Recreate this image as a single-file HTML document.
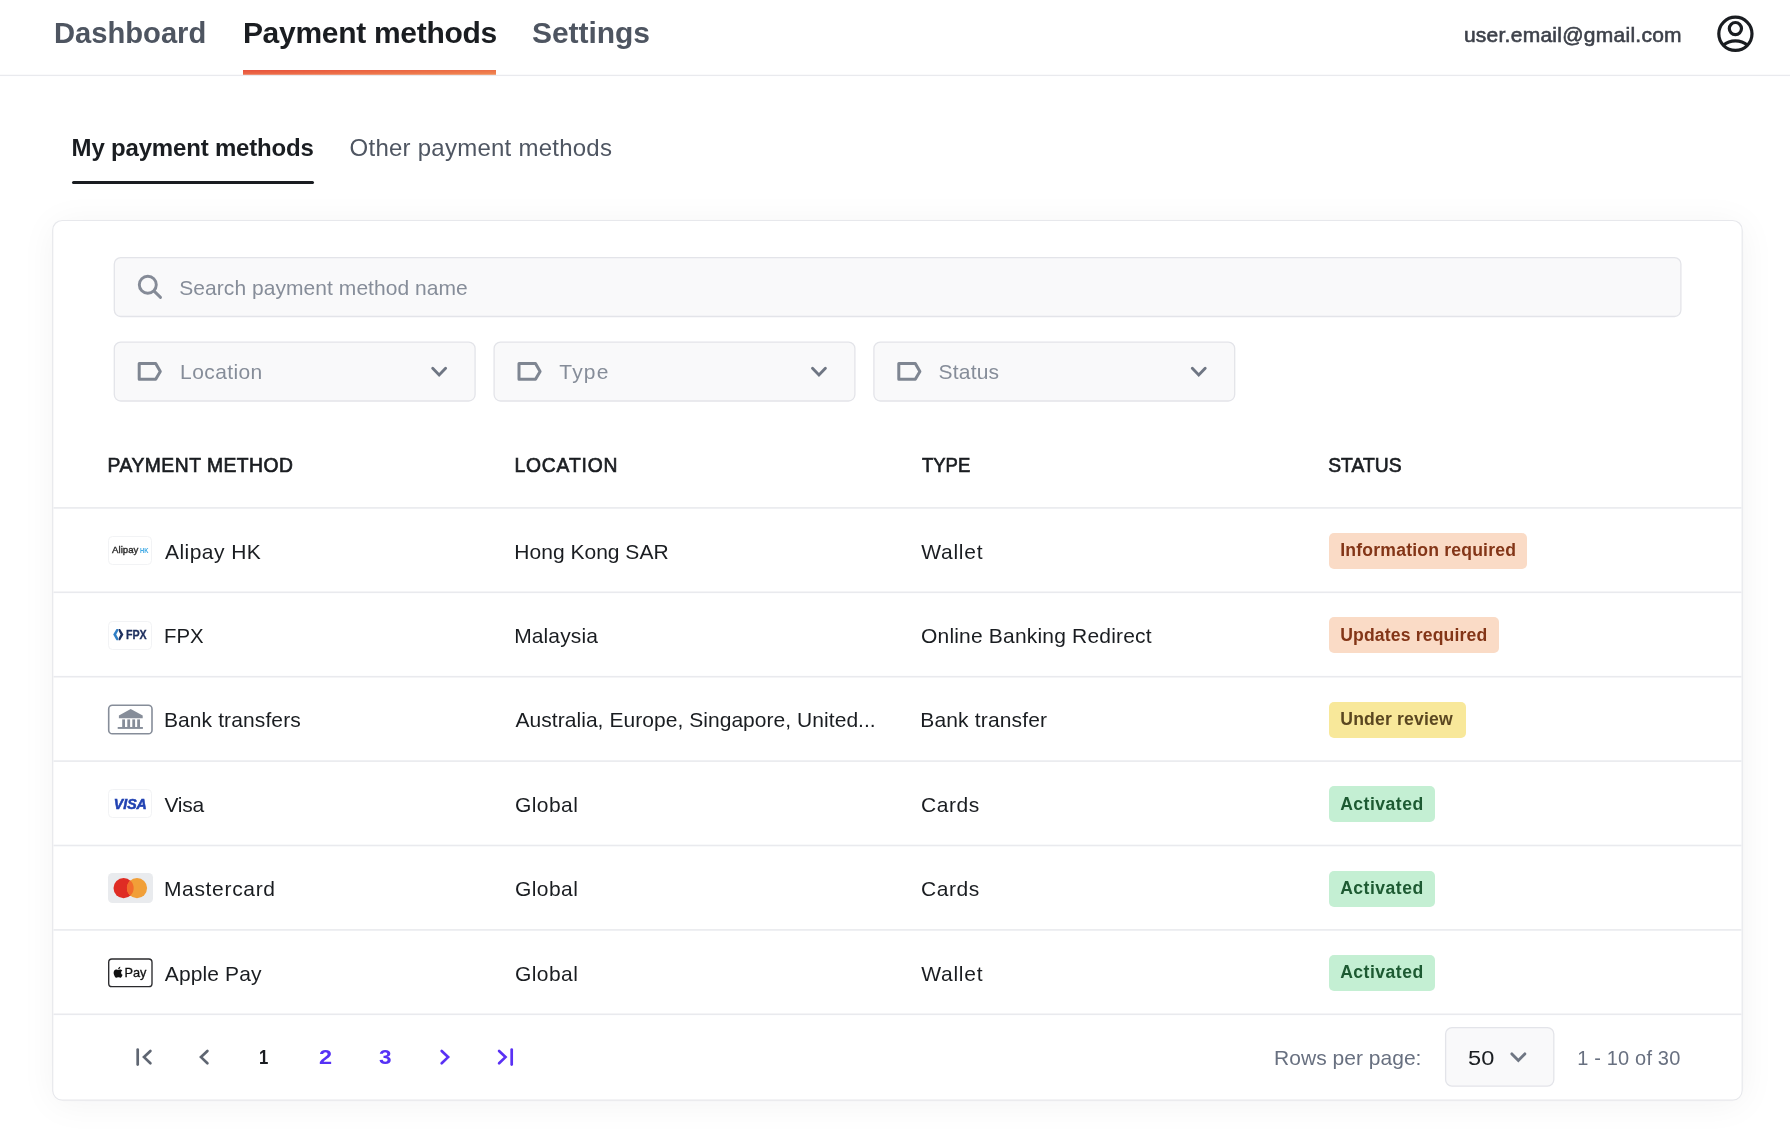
<!DOCTYPE html>
<html lang="en">
<head>
<meta charset="utf-8">
<title>Payment methods</title>
<style>
*{box-sizing:border-box;margin:0;padding:0}
html,body{width:1790px;height:1148px;overflow:hidden;background:#fff}
body{position:relative;font-family:"Liberation Sans",sans-serif;color:#1a1d21}
.t{position:absolute;white-space:pre;display:block}
#root{position:absolute;left:0;top:0;width:1790px;height:1148px;will-change:transform}
.navactive{position:absolute;left:243px;top:69.9px;width:253.4px;height:5px;background:linear-gradient(to bottom,rgba(228,70,55,.35),rgba(245,150,90,.35)),linear-gradient(to right,#e9583f,#f08650)}
.subactive{position:absolute;left:71.6px;top:181px;width:242.2px;height:3.2px;background:#1a1d21;border-radius:1.5px}
.card{position:absolute;left:52.5px;top:220.3px;width:1690px;height:880px;border-radius:10px;background:#fff;box-shadow:0 4px 36px rgba(15,20,40,.05),0 1px 8px rgba(15,20,40,.02)}
.badge{position:absolute;height:36px;border-radius:5px}
.logo{position:absolute;left:108.2px;width:44.2px;height:29px;border-radius:4.5px;background:#fff;border:1px solid #f2f3f5;overflow:hidden}
svg{position:absolute;overflow:visible}
</style>
</head>
<body>
<div id="root">
<div class="navactive"></div>
<div class="subactive"></div>
<div class="card"></div>
<svg width="1790" height="1148" viewBox="0 0 1790 1148" style="left:0;top:0"><rect x="52.7" y="220.5" width="1689.5" height="879.6" rx="9.5" fill="#fff" stroke="#e7e8ec" stroke-width="1.2"/><g fill="#f9f9fa" stroke="#e3e4e9" stroke-width="1.3">
<rect x="114.3" y="257.6" width="1566.6" height="58.9" rx="6.4"/>
<rect x="114.3" y="342.1" width="360.8" height="58.9" rx="6.4"/>
<rect x="494.1" y="342.1" width="360.8" height="58.9" rx="6.4"/>
<rect x="873.9" y="342.1" width="360.8" height="58.9" rx="6.4"/>
<rect x="1445.6" y="1027.7" width="108.2" height="58.5" rx="6.4"/>
</g></svg>
<div class="badge" style="left:1328.6px;top:532.9px;width:198.6px;background:#fadbc6"></div>
<div class="badge" style="left:1328.6px;top:617.3px;width:170.1px;background:#fadbc6"></div>
<div class="badge" style="left:1328.6px;top:701.7px;width:137.0px;background:#f8e89a"></div>
<div class="badge" style="left:1328.6px;top:786.1px;width:106.8px;background:#c4efd3"></div>
<div class="badge" style="left:1328.6px;top:870.5px;width:106.8px;background:#c4efd3"></div>
<div class="badge" style="left:1328.6px;top:954.9px;width:106.8px;background:#c4efd3"></div>
<svg width="1790" height="1148" viewBox="0 0 1790 1148" style="left:0;top:0"><g fill="#e9eaee"><rect x="0" y="74.75" width="1790" height="1.3"/><rect x="53.5" y="507.10" width="1688" height="1.6"/><rect x="53.5" y="591.50" width="1688" height="1.6"/><rect x="53.5" y="675.90" width="1688" height="1.6"/><rect x="53.5" y="760.30" width="1688" height="1.6"/><rect x="53.5" y="844.70" width="1688" height="1.6"/><rect x="53.5" y="929.10" width="1688" height="1.6"/><rect x="53.5" y="1013.50" width="1688" height="1.6"/></g></svg>
<svg width="1790" height="1148" viewBox="0 0 1790 1148" style="left:0;top:0">
<!-- user icon -->
<g fill="none" stroke="#1a1d21" stroke-width="3.2">
<circle cx="1735.4" cy="33.8" r="16.6"/>
<circle cx="1735.4" cy="28.6" r="6.1"/>
<path d="M1723.2,45.2 C1726.6,42.4 1730.8,40.9 1735.4,40.9 C1740,40.9 1744.2,42.4 1747.6,45.2"/>
</g>
<!-- search icon -->
<g fill="none" stroke="#858b97" stroke-width="2.9" stroke-linecap="round">
<circle cx="147.8" cy="284.8" r="8.5"/>
<path d="M154.1,291.1 L160.5,297.4"/>
</g>
<!-- label icons -->
<g fill="none" stroke="#7f8692" stroke-width="3" stroke-linejoin="round">
<path d="M139.2,363.5 H155.7 L160.3,371.4 L155.7,379.3 H139.2 Z"/>
<path d="M519.0,363.5 H535.5 L540.1,371.4 L535.5,379.3 H519.0 Z"/>
<path d="M898.8,363.5 H915.3 L919.9,371.4 L915.3,379.3 H898.8 Z"/>
</g>
<!-- chevrons -->
<g fill="none" stroke="#6f7683" stroke-width="2.9" stroke-linecap="round" stroke-linejoin="miter">
<path d="M432.70,368.3 L439.15,374.9 L445.60,368.3"/>
<path d="M812.50,368.3 L818.95,374.9 L825.40,368.3"/>
<path d="M1192.30,368.3 L1198.75,374.9 L1205.20,368.3"/>
<path d="M1511.90,1053.9 L1518.35,1060.5 L1524.80,1053.9"/>
</g>
<!-- pagination icons -->
<g fill="none" stroke="#5f6672" stroke-width="2.7" stroke-linecap="round" stroke-linejoin="miter">
<path d="M137.7,1049.6 V1064.6"/>
<path d="M150.4,1051 L144,1057.1 L150.4,1063.3"/>
<path d="M207.4,1051 L201,1057.1 L207.4,1063.3"/>
</g>
<g fill="none" stroke="#5a31f4" stroke-width="2.7" stroke-linecap="round" stroke-linejoin="miter">
<path d="M441.7,1051 L448.1,1057.1 L441.7,1063.3"/>
<path d="M499.1,1051 L505.5,1057.1 L499.1,1063.3"/>
<path d="M511.7,1049.6 V1064.6"/>
</g>
</svg>
<!-- logos -->
<div class="logo" style="top:536.1px"></div>
<div class="logo" style="top:620.6px"></div>

<div class="logo" style="top:789.4px"></div>
<div class="logo" style="top:873.3px;border:none;background:#e9ebee;left:107.9px;width:44.8px;height:29.9px"></div>

<svg width="1790" height="1148" viewBox="0 0 1790 1148" style="left:0;top:0" font-family="Liberation Sans, sans-serif">
<!-- alipay -->
<text x="112.1" y="553" font-size="8.8" font-weight="400" fill="#2d2d2d" stroke="#2d2d2d" stroke-width="0.35" textLength="26.3" lengthAdjust="spacingAndGlyphs">Alipay</text>
<text x="140" y="553" font-size="6.3" font-weight="700" fill="#3fa9e5" textLength="8.4" lengthAdjust="spacingAndGlyphs">HK</text>
<!-- fpx -->
<path d="M113.2,634.5 L116.5,628.9 L118.2,628.9 L118.2,640.2 L116.5,640.2 Z" fill="#2f7fc6"/>
<path d="M123.4,634.5 L120.1,628.9 L118.6,628.9 L118.6,640.2 L120.1,640.2 Z" fill="#1d2f5e"/>
<path d="M116.2,634.5 L118.4,630.6 L120.6,634.5 L118.4,638.4 Z" fill="#fff"/>
<text x="125.9" y="638.7" font-size="12.2" font-weight="700" fill="#1d2f5e" stroke="#1d2f5e" stroke-width="0.3" textLength="20.8" lengthAdjust="spacingAndGlyphs">FPX</text>
<!-- bank -->
<rect x="108.7" y="705.3" width="43.3" height="28.5" rx="3.6" fill="#fff" stroke="#868d99" stroke-width="1.6"/>
<rect x="108.7" y="959.0" width="43.3" height="27.6" rx="3.2" fill="#fff" stroke="#2a2a2d" stroke-width="1.35"/>
<g fill="#868d99">
<path d="M130.7,709 L142.7,715.6 V718.2 H118.9 V715.6 Z"/>
<rect x="122.2" y="719.4" width="2.8" height="7.8"/>
<rect x="127.3" y="719.4" width="2.8" height="7.8"/>
<rect x="132.3" y="719.4" width="2.8" height="7.8"/>
<rect x="137.2" y="719.4" width="2.8" height="7.8"/>
<rect x="117.7" y="727" width="25.2" height="1.9"/>
</g>
<!-- visa -->
<text x="113.8" y="808.7" font-size="15" font-weight="700" font-style="italic" fill="#2142b2" stroke="#2142b2" stroke-width="0.55" textLength="33" lengthAdjust="spacingAndGlyphs">VISA</text>
<!-- mastercard -->
<circle cx="123.6" cy="888.1" r="10.1" fill="#df2c24"/>
<circle cx="137" cy="888.1" r="10.1" fill="#f19f38"/>
<path d="M130.3,880.55 A10.1,10.1 0 0 1 130.3,895.65 A10.1,10.1 0 0 1 130.3,880.55 Z" fill="#f26b2c"/>
<!-- apple pay -->
<g transform="translate(112.6,966.8) scale(0.458)" fill="#111">
<path d="M12.152 6.896c-.948 0-2.415-1.078-3.96-1.04-2.04.027-3.91 1.183-4.961 3.014-2.117 3.675-.546 9.103 1.519 12.09 1.013 1.454 2.208 3.09 3.792 3.039 1.52-.065 2.09-.987 3.935-.987 1.831 0 2.35.987 3.96.948 1.637-.026 2.676-1.48 3.676-2.948 1.156-1.688 1.636-3.325 1.662-3.415-.039-.013-3.182-1.221-3.22-4.857-.026-3.04 2.48-4.494 2.597-4.559-1.429-2.09-3.623-2.324-4.39-2.376-2-.156-3.675 1.09-4.61 1.09zM15.53 3.83c.843-1.012 1.4-2.427 1.245-3.83-1.207.052-2.662.805-3.532 1.818-.78.896-1.454 2.338-1.273 3.714 1.338.104 2.715-.688 3.559-1.701"/>
</g>
<text x="124.5" y="977.2" font-size="12.8" fill="#111" stroke="#111" stroke-width="0.3" textLength="22" lengthAdjust="spacingAndGlyphs">Pay</text>
</svg>

<span class="t" style="left:53.88px;top:17.61px;font-size:30px;line-height:30px;color:#4e5561;letter-spacing:0.000px;font-weight:700;transform:scaleX(0.9718);transform-origin:0 0">Dashboard</span>
<span class="t" style="left:242.90px;top:17.61px;font-size:30px;line-height:30px;color:#1a1d21;letter-spacing:-0.290px;font-weight:700">Payment methods</span>
<span class="t" style="left:532.08px;top:17.61px;font-size:30px;line-height:30px;color:#4e5561;letter-spacing:-0.083px;font-weight:700">Settings</span>
<span class="t" style="left:1463.89px;top:23.72px;font-size:21px;line-height:21px;color:#3d414a;letter-spacing:0.264px;-webkit-text-stroke:0.6px #3d414a">user.email@gmail.com</span>
<span class="t" style="left:71.62px;top:136.48px;font-size:24px;line-height:24px;color:#1a1d21;letter-spacing:-0.185px;font-weight:700">My payment methods</span>
<span class="t" style="left:349.60px;top:135.58px;font-size:24px;line-height:24px;color:#4f5662;letter-spacing:0.245px">Other payment methods</span>
<span class="t" style="left:179.29px;top:276.82px;font-size:21px;line-height:21px;color:#868d99;letter-spacing:0.054px">Search payment method name</span>
<span class="t" style="left:180.09px;top:361.12px;font-size:21px;line-height:21px;color:#868d99;letter-spacing:0.403px">Location</span>
<span class="t" style="left:559.37px;top:361.12px;font-size:21px;line-height:21px;color:#868d99;letter-spacing:1.142px">Type</span>
<span class="t" style="left:938.52px;top:361.12px;font-size:21px;line-height:21px;color:#868d99;letter-spacing:0.211px">Status</span>
<span class="t" style="left:107.60px;top:455.96px;font-size:19.3px;line-height:19.3px;color:#1a1d21;letter-spacing:0.495px;-webkit-text-stroke:0.65px #1a1d21">PAYMENT METHOD</span>
<span class="t" style="left:514.38px;top:455.96px;font-size:19.3px;line-height:19.3px;color:#1a1d21;letter-spacing:0.862px;-webkit-text-stroke:0.65px #1a1d21">LOCATION</span>
<span class="t" style="left:922.22px;top:455.96px;font-size:19.3px;line-height:19.3px;color:#1a1d21;letter-spacing:0.000px;transform:scaleX(0.9579);transform-origin:0 0;-webkit-text-stroke:0.65px #1a1d21">TYPE</span>
<span class="t" style="left:1328.21px;top:455.96px;font-size:19.3px;line-height:19.3px;color:#1a1d21;letter-spacing:0.034px;-webkit-text-stroke:0.65px #1a1d21">STATUS</span>
<span class="t" style="left:165.10px;top:540.62px;font-size:21px;line-height:21px;color:#1a1d21;letter-spacing:0.429px">Alipay HK</span>
<span class="t" style="left:514.35px;top:540.62px;font-size:21px;line-height:21px;color:#1a1d21;letter-spacing:0.010px">Hong Kong SAR</span>
<span class="t" style="left:921.20px;top:540.62px;font-size:21px;line-height:21px;color:#1a1d21;letter-spacing:0.760px">Wallet</span>
<span class="t" style="left:1340.29px;top:542.40px;font-size:17.6px;line-height:17.6px;color:#833517;letter-spacing:0.192px;font-weight:700">Information required</span>
<span class="t" style="left:164.02px;top:625.02px;font-size:21px;line-height:21px;color:#1a1d21;letter-spacing:0.000px;transform:scaleX(0.9681);transform-origin:0 0">FPX</span>
<span class="t" style="left:514.13px;top:625.02px;font-size:21px;line-height:21px;color:#1a1d21;letter-spacing:0.129px">Malaysia</span>
<span class="t" style="left:921.04px;top:625.02px;font-size:21px;line-height:21px;color:#1a1d21;letter-spacing:0.184px">Online Banking Redirect</span>
<span class="t" style="left:1340.18px;top:626.80px;font-size:17.6px;line-height:17.6px;color:#833517;letter-spacing:0.157px;font-weight:700">Updates required</span>
<span class="t" style="left:163.93px;top:709.42px;font-size:21px;line-height:21px;color:#1a1d21;letter-spacing:0.109px">Bank transfers</span>
<span class="t" style="left:515.48px;top:709.42px;font-size:21px;line-height:21px;color:#1a1d21;letter-spacing:0.049px">Australia, Europe, Singapore, United...</span>
<span class="t" style="left:920.29px;top:709.42px;font-size:21px;line-height:21px;color:#1a1d21;letter-spacing:0.154px">Bank transfer</span>
<span class="t" style="left:1340.31px;top:711.20px;font-size:17.6px;line-height:17.6px;color:#5a4720;letter-spacing:0.163px;font-weight:700">Under review</span>
<span class="t" style="left:164.45px;top:793.82px;font-size:21px;line-height:21px;color:#1a1d21;letter-spacing:-0.240px">Visa</span>
<span class="t" style="left:515.04px;top:793.82px;font-size:21px;line-height:21px;color:#1a1d21;letter-spacing:0.412px">Global</span>
<span class="t" style="left:921.02px;top:793.82px;font-size:21px;line-height:21px;color:#1a1d21;letter-spacing:0.538px">Cards</span>
<span class="t" style="left:1340.18px;top:795.60px;font-size:17.6px;line-height:17.6px;color:#1d5a32;letter-spacing:0.477px;font-weight:700">Activated</span>
<span class="t" style="left:163.91px;top:878.22px;font-size:21px;line-height:21px;color:#1a1d21;letter-spacing:0.675px">Mastercard</span>
<span class="t" style="left:515.04px;top:878.22px;font-size:21px;line-height:21px;color:#1a1d21;letter-spacing:0.412px">Global</span>
<span class="t" style="left:921.02px;top:878.22px;font-size:21px;line-height:21px;color:#1a1d21;letter-spacing:0.538px">Cards</span>
<span class="t" style="left:1340.18px;top:880.00px;font-size:17.6px;line-height:17.6px;color:#1d5a32;letter-spacing:0.477px;font-weight:700">Activated</span>
<span class="t" style="left:164.75px;top:962.62px;font-size:21px;line-height:21px;color:#1a1d21;letter-spacing:0.134px">Apple Pay</span>
<span class="t" style="left:515.04px;top:962.62px;font-size:21px;line-height:21px;color:#1a1d21;letter-spacing:0.412px">Global</span>
<span class="t" style="left:921.20px;top:962.62px;font-size:21px;line-height:21px;color:#1a1d21;letter-spacing:0.760px">Wallet</span>
<span class="t" style="left:1340.18px;top:964.40px;font-size:17.6px;line-height:17.6px;color:#1d5a32;letter-spacing:0.477px;font-weight:700">Activated</span>
<span class="t" style="left:259.06px;top:1048.39px;font-size:19.5px;line-height:19.5px;color:#1a1d21;letter-spacing:0.000px;font-weight:700;transform:scaleX(0.8600);transform-origin:0 0">1</span>
<span class="t" style="left:318.51px;top:1048.39px;font-size:19.5px;line-height:19.5px;color:#5631f5;letter-spacing:0.000px;font-weight:700;transform:scaleX(1.2073);transform-origin:0 0">2</span>
<span class="t" style="left:378.50px;top:1048.39px;font-size:19.5px;line-height:19.5px;color:#5631f5;letter-spacing:0.000px;font-weight:700;transform:scaleX(1.1582);transform-origin:0 0">3</span>
<span class="t" style="left:1274.08px;top:1047.12px;font-size:21px;line-height:21px;color:#687080;letter-spacing:0.023px">Rows per page:</span>
<span class="t" style="left:1467.67px;top:1047.55px;font-size:20.5px;line-height:20.5px;color:#1a1d21;letter-spacing:0.000px;transform:scaleX(1.1516);transform-origin:0 0">50</span>
<span class="t" style="left:1577.22px;top:1047.97px;font-size:20px;line-height:20px;color:#687080;letter-spacing:0.170px">1 - 10 of 30</span>
</div>
</body>
</html>
